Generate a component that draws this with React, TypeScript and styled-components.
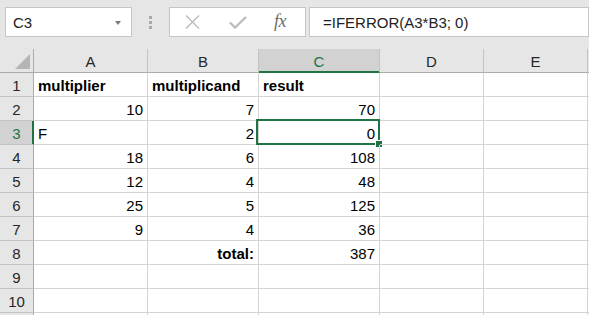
import React from "react";
import styled, { createGlobalStyle, css } from "styled-components";

const GlobalStyle = createGlobalStyle`
  html, body {
    margin: 0;
    padding: 0;
    background: #e6e6e6;
    overflow: hidden;
  }
  body {
    font-family: "Liberation Sans", Arial, sans-serif;
    font-size: 15px;
    color: #000;
  }
  * { box-sizing: border-box; }
`;

const GREEN = "#217346";

const Page = styled.div`
  width: 589px;
  height: 315px;
  overflow: hidden;
  background: #e6e6e6;
`;

const FormulaBar = styled.div`
  display: flex;
  align-items: flex-start;
  padding-top: 7px;
  height: 37px;
`;

const Field = styled.div`
  height: 30px;
  background: #fff;
  border: 1px solid #c6c6c6;
  display: flex;
  align-items: center;
`;

const NameBox = styled(Field)`
  width: 127px;
  margin-left: 5px;
  padding: 1px 0 0 7px;
  justify-content: space-between;
  color: #222;
`;

const DropArrow = styled.span`
  width: 0;
  height: 0;
  margin-right: 10px;
  margin-top: 1px;
  border-left: 3px solid transparent;
  border-right: 3px solid transparent;
  border-top: 4px solid #7a7a7a;
`;

const Grip = styled.div`
  width: 37px;
  height: 30px;
  display: flex;
  flex-direction: column;
  align-items: center;
  justify-content: center;
  gap: 2px;
  padding-top: 1px;
`;

const GripDot = styled.span`
  width: 3px;
  height: 3px;
  background: #a8a8a8;
`;

const IconBox = styled(Field)`
  width: 137px;
  padding-left: 15px;
`;

const IconSlot = styled.span<{ $gap: number }>`
  display: flex;
  align-items: center;
  margin-left: ${(p) => p.$gap}px;
`;

const Fx = styled.span`
  font-family: "Liberation Serif", "Times New Roman", serif;
  font-style: italic;
  font-size: 18px;
  color: #6e6e6e;
  letter-spacing: -0.5px;
  margin-left: 27px;
  margin-top: -1px;
`;

const FormulaInput = styled(Field)`
  flex: 1;
  margin-left: 3px;
  padding: 1px 0 0 13px;
  color: #222;
  white-space: nowrap;
`;

const Sheet = styled.div`
  margin-top: 12px;
  display: grid;
  grid-template-columns: 34px 114px 111px 121px 104px 104px 1fr;
  grid-auto-rows: 24px;
  background: #fff;
`;

const Corner = styled.div`
  background: #e6e6e6;
  border-right: 1px solid #ababab;
  border-bottom: 1px solid #ababab;
  display: flex;
  align-items: flex-end;
  justify-content: flex-end;
  padding: 0 3px 3px 0;
`;

const CornerTriangle = styled.span`
  width: 0;
  height: 0;
  border-left: 15px solid transparent;
  border-bottom: 15px solid #b5b5b5;
`;

const ColHeader = styled.div<{ $selected?: boolean }>`
  background: ${(p) => (p.$selected ? "#d2d2d2" : "#e6e6e6")};
  border-right: 1px solid #c3c3c3;
  border-bottom: 1px solid #ababab;
  display: flex;
  align-items: center;
  justify-content: center;
  padding-top: 2px;
  line-height: 17px;
  color: ${(p) => (p.$selected ? GREEN : "#262626")};
  ${(p) =>
    p.$selected &&
    css`
      box-shadow: inset 0 -1px 0 ${GREEN};
      border-bottom-color: ${GREEN};
    `}
`;

const RowHeader = styled.div<{ $selected?: boolean }>`
  background: ${(p) => (p.$selected ? "#d2d2d2" : "#e6e6e6")};
  border-right: 1px solid #ababab;
  border-bottom: 1px solid #c3c3c3;
  display: flex;
  align-items: center;
  justify-content: center;
  line-height: 17px;
  padding-top: 1px;
  color: ${(p) => (p.$selected ? GREEN : "#262626")};
  ${(p) =>
    p.$selected &&
    css`
      box-shadow: inset -1px 0 0 ${GREEN};
      border-right-color: ${GREEN};
    `}
`;

const Cell = styled.div<{ $align?: "left" | "right"; $bold?: boolean; $active?: boolean }>`
  position: relative;
  border-right: 1px solid #d4d4d4;
  border-bottom: 1px solid #d4d4d4;
  display: flex;
  align-items: flex-end;
  justify-content: ${(p) => (p.$align === "right" ? "flex-end" : "flex-start")};
  padding: 0 4px 2px 4px;
  line-height: 17px;
  font-weight: ${(p) => (p.$bold ? 700 : 400)};
  white-space: nowrap;
  ${(p) =>
    p.$active &&
    css`
      &::before {
        content: "";
        position: absolute;
        left: -3px;
        top: -2px;
        right: -1px;
        bottom: -1px;
        border: 2px solid ${GREEN};
        pointer-events: none;
      }
    `}
`;

const FillHandle = styled.span`
  position: absolute;
  right: -3px;
  bottom: -3px;
  width: 7px;
  height: 7px;
  background: ${GREEN};
  border: 1px solid #fff;
  border-right: none;
  border-bottom: none;
`;

type CellData = { v?: string; align?: "left" | "right"; bold?: boolean };

const columns = ["A", "B", "C", "D", "E"];

const rows: CellData[][] = [
  [
    { v: "multiplier", bold: true },
    { v: "multiplicand", bold: true },
    { v: "result", bold: true },
  ],
  [{ v: "10", align: "right" }, { v: "7", align: "right" }, { v: "70", align: "right" }],
  [{ v: "F" }, { v: "2", align: "right" }, { v: "0", align: "right" }],
  [{ v: "18", align: "right" }, { v: "6", align: "right" }, { v: "108", align: "right" }],
  [{ v: "12", align: "right" }, { v: "4", align: "right" }, { v: "48", align: "right" }],
  [{ v: "25", align: "right" }, { v: "5", align: "right" }, { v: "125", align: "right" }],
  [{ v: "9", align: "right" }, { v: "4", align: "right" }, { v: "36", align: "right" }],
  [{}, { v: "total:", align: "right", bold: true }, { v: "387", align: "right" }],
  [],
  [],
  [],
];

const VISIBLE_LABELS = 10;

const CloseIcon = () => (
  <svg width="15" height="14" viewBox="0 0 15 14">
    <path d="M1 0.5 L14 13.5 M14 0.5 L1 13.5" stroke="#bcbcbc" strokeWidth="1.4" fill="none" />
  </svg>
);

const CheckIcon = () => (
  <svg width="18" height="13" viewBox="0 0 18 13">
    <path d="M1 6.5 L6 11.5 L17 1" stroke="#bcbcbc" strokeWidth="2.4" fill="none" />
  </svg>
);

export default function App() {
  return (
    <Page>
      <GlobalStyle />
      <FormulaBar>
        <NameBox>
          <span>C3</span>
          <DropArrow />
        </NameBox>
        <Grip>
          <GripDot />
          <GripDot />
          <GripDot />
        </Grip>
        <IconBox>
          <IconSlot $gap={0}>
            <CloseIcon />
          </IconSlot>
          <IconSlot $gap={29}>
            <CheckIcon />
          </IconSlot>
          <Fx>fx</Fx>
        </IconBox>
        <FormulaInput>=IFERROR(A3*B3; 0)</FormulaInput>
      </FormulaBar>
      <Sheet>
        <Corner>
          <CornerTriangle />
        </Corner>
        {columns.map((c) => (
          <ColHeader key={c} $selected={c === "C"}>
            {c}
          </ColHeader>
        ))}
        <ColHeader />
        {rows.map((row, ri) => (
          <React.Fragment key={ri}>
            <RowHeader $selected={ri === 2}>{ri < VISIBLE_LABELS ? ri + 1 : ""}</RowHeader>
            {columns.map((c, ci) => {
              const d = row[ci] || {};
              const active = ri === 2 && c === "C";
              return (
                <Cell key={c} $align={d.align} $bold={d.bold} $active={active}>
                  {d.v}
                  {active && <FillHandle />}
                </Cell>
              );
            })}
            <Cell />
          </React.Fragment>
        ))}
      </Sheet>
    </Page>
  );
}
